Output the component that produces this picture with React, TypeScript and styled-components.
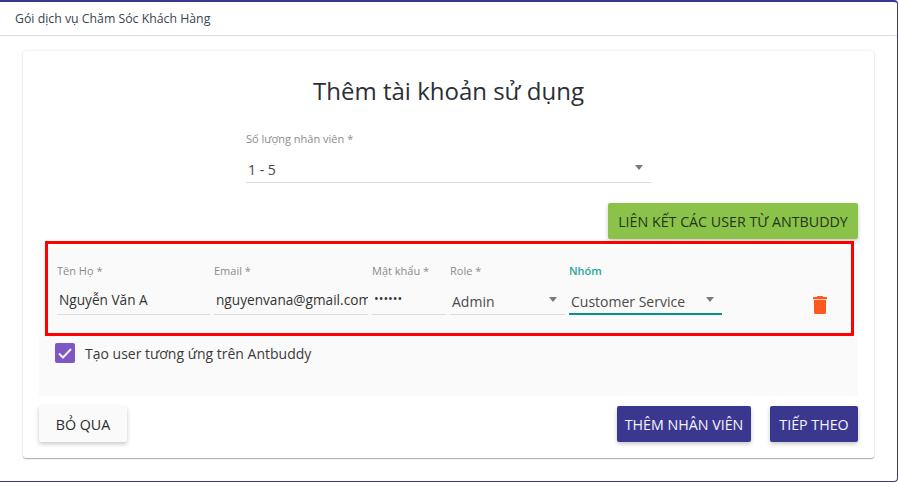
import React from "react";
import styled, { createGlobalStyle } from "styled-components";

const Global = createGlobalStyle`
  html, body { margin: 0; padding: 0; background: #fff; }
  body { font-family: "Open Sans", "Noto Sans", sans-serif; color: #212529; }
  * { box-sizing: border-box; }
`;

const Frame = styled.div`
  width: 898px;
  height: 482px;
  border-top: 2px solid #3a3791;
  border-right: 1px solid #3a3791;
  border-bottom: 1px solid #3a3791;
  border-radius: 0 4px 4px 0;
  background: #fff;
  display: flex;
  flex-direction: column;
`;
const Header = styled.div`
  height: 34px;
  flex: none;
  display: flex;
  align-items: center;
  padding-left: 15px;
  font-size: 12.3px;
  color: #3b4350;
  border-bottom: 1px solid #d9dde3;
`;
const Card = styled.div`
  position: relative;
  margin: 15px 23px 0 23px;
  height: 407px;
  background: #fff;
  border-radius: 3px;
  box-shadow: 0 1px 1px rgba(0, 0, 0, 0.3), 0 0 3px rgba(0, 0, 0, 0.12);
  padding: 16px 16px;
  display: flex;
  flex-direction: column;
`;
const Title = styled.h1`
  margin: 6px 0 0;
  font-size: 24px;
  font-weight: 400;
  line-height: 36px;
  text-align: center;
  color: #2b2f36;
`;
const CountField = styled.div`
  width: 405px;
  margin: 22px auto 0;
`;
const Label = styled.div<{ $active?: boolean }>`
  font-size: 11px;
  line-height: 16px;
  white-space: nowrap;
  color: ${(p) => (p.$active ? "#26a69a" : "#8b8b8b")};
  font-weight: ${(p) => (p.$active ? 600 : 400)};
`;
const Control = styled.div<{ $active?: boolean }>`
  display: flex;
  align-items: center;
  justify-content: space-between;
  overflow: hidden;
  white-space: nowrap;
  font-size: 14px;
  color: #3f3f3f;
  border-bottom: ${(p) => (p.$active ? "2px solid #009688" : "1px solid #dcdcdc")};
`;
const CountValue = styled(Control)`
  height: 28px;
  margin-top: 8px;
  padding: 2px 8px 0 2px;
  color: #454545;
`;
const Caret = styled.span`
  flex: none;
  width: 0;
  height: 0;
  border-left: 4.5px solid transparent;
  border-right: 4.5px solid transparent;
  border-top: 5px solid #7a7a7a;
  margin-bottom: 4px;
`;
const LinkRow = styled.div`
  display: flex;
  justify-content: flex-end;
  margin-top: 20px;
`;
const Button = styled.button<{ $tone: "green" | "navy" | "plain" }>`
  height: 36px;
  border: 0;
  border-radius: 2px;
  padding: 0;
  font: 400 14.25px "Open Sans", sans-serif;
  white-space: nowrap;
  box-shadow: 0 2px 4px rgba(0, 0, 0, 0.22);
  background: ${(p) => (p.$tone === "green" ? "#8bc34a" : p.$tone === "navy" ? "#3a3791" : "#fafafa")};
  color: ${(p) => (p.$tone === "navy" ? "#f4f4fb" : p.$tone === "green" ? "#24351a" : "#2b2b2b")};
`;
const LinkButton = styled(Button)`
  width: 250px;
`;
const Panel = styled.div`
  margin-top: 9px;
  height: 148px;
  background: #fafafa;
  padding: 15px 18px 0 18px;
`;
const Row = styled.div`
  display: flex;
  gap: 4px;
  align-items: flex-start;
`;
const Field = styled.div<{ $w: number }>`
  width: ${(p) => p.$w}px;
  flex: none;
`;
const InputValue = styled(Control)`
  height: 30px;
  margin-top: 6px;
  padding: 0 0 0 2px;
  font-size: 13.65px;
  color: #333;
`;
const SelectValue = styled(Control)`
  height: 30px;
  margin-top: 6px;
  padding: 4px 8px 0 2px;
  color: #4a4a4a;
`;
const Dots = styled.span`
  font-size: 12.5px;
  line-height: 14px;
  margin-bottom: 2px;
`;
const Trash = styled.div`
  margin: 33px 0 0 87px;
  color: #ff5722;
  display: flex;
`;
const CheckRow = styled.label`
  display: flex;
  align-items: center;
  gap: 10px;
  margin: 28px 0 0 -2px;
  font-size: 14px;
  color: #3a3a3a;
`;
const Box = styled.span`
  width: 20px;
  height: 20px;
  background: #7e57c2;
  border-radius: 2px;
  display: flex;
  align-items: center;
  justify-content: center;
`;
const Footer = styled.div`
  margin-top: 10px;
  display: flex;
  align-items: center;
`;
const Skip = styled(Button)`
  width: 88px;
  margin-right: auto;
`;
const AddBtn = styled(Button)`
  width: 134px;
`;
const NextBtn = styled(Button)`
  width: 88px;
  margin-left: 19px;
`;
const Highlight = styled.div`
  position: absolute;
  left: 22px;
  top: 190px;
  width: 809px;
  height: 95px;
  border: 3px solid #fe0000;
  pointer-events: none;
`;

export default function App() {
  return (
    <>
      <Global />
      <Frame>
        <Header>Gói dịch vụ Chăm Sóc Khách Hàng</Header>
        <Card>
          <Title>Thêm tài khoản sử dụng</Title>
          <CountField>
            <Label>Số lượng nhân viên *</Label>
            <CountValue>
              1 - 5
              <Caret />
            </CountValue>
          </CountField>
          <LinkRow>
            <LinkButton $tone="green">LIÊN KẾT CÁC USER TỪ ANTBUDDY</LinkButton>
          </LinkRow>
          <Panel>
            <Row>
              <Field $w={153}>
                <Label>Tên Họ *</Label>
                <InputValue>Nguyễn Văn A</InputValue>
              </Field>
              <Field $w={154}>
                <Label>Email *</Label>
                <InputValue>nguyenvana@gmail.com</InputValue>
              </Field>
              <Field $w={74}>
                <Label>Mật khẩu *</Label>
                <InputValue>
                  <Dots>••••••</Dots>
                </InputValue>
              </Field>
              <Field $w={115}>
                <Label>Role *</Label>
                <SelectValue>
                  Admin
                  <Caret />
                </SelectValue>
              </Field>
              <Field $w={153}>
                <Label $active>Nhóm</Label>
                <SelectValue $active>
                  Customer Service
                  <Caret />
                </SelectValue>
              </Field>
              <Trash>
                <svg width="14" height="18" viewBox="0 0 14 18" fill="currentColor">
                  <path d="M4.5 0h5l.8 1H14v2.2H0V1h3.7z" />
                  <path d="M1 4h12v12.5a1.5 1.5 0 0 1-1.5 1.5h-9A1.5 1.5 0 0 1 1 16.5z" />
                </svg>
              </Trash>
            </Row>
            <CheckRow>
              <Box>
                <svg width="14" height="11" viewBox="0 0 14 11" fill="none" stroke="#f1edf9" strokeWidth="2">
                  <path d="M1 5.5l4 4L13 1" />
                </svg>
              </Box>
              Tạo user tương ứng trên Antbuddy
            </CheckRow>
          </Panel>
          <Footer>
            <Skip $tone="plain">BỎ QUA</Skip>
            <AddBtn $tone="navy">THÊM NHÂN VIÊN</AddBtn>
            <NextBtn $tone="navy">TIẾP THEO</NextBtn>
          </Footer>
          <Highlight />
        </Card>
      </Frame>
    </>
  );
}
